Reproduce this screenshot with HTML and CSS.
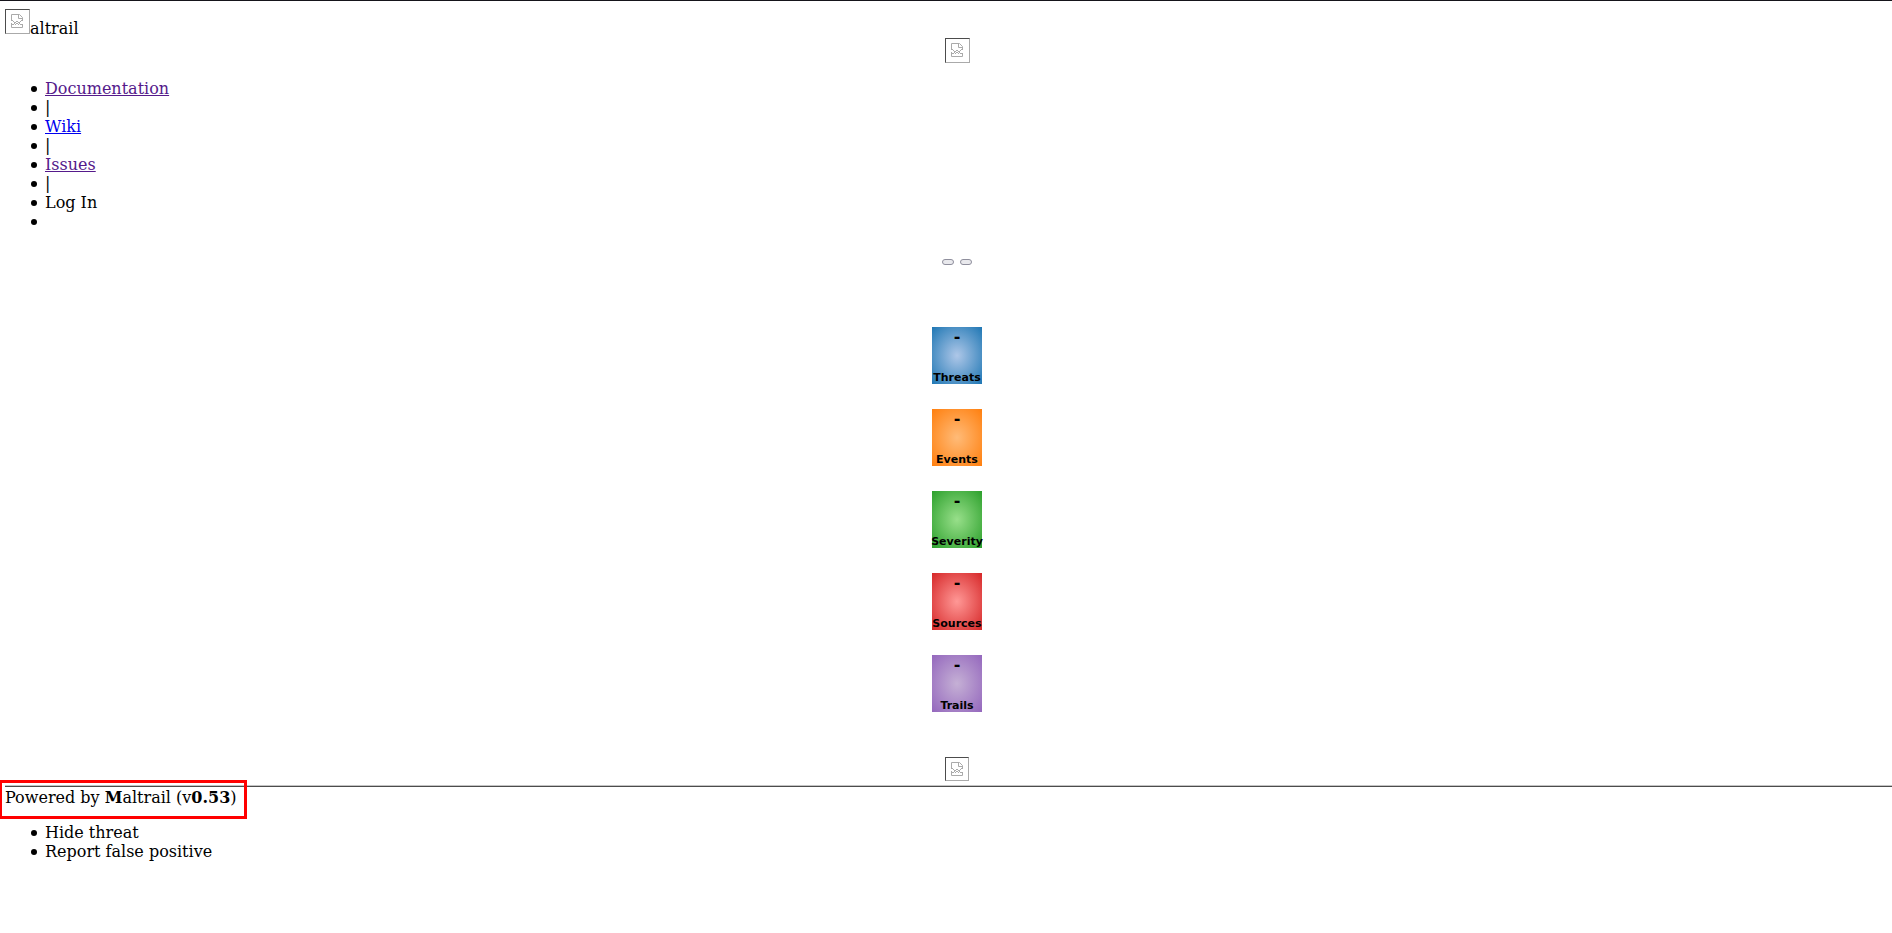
FILE: index.html
```html
<!DOCTYPE html>
<html lang="en">
<head>
<meta charset="utf-8">
<title>Maltrail</title>
<link rel="stylesheet" href="styles.css">
</head>
<body>
<svg class="defs" aria-hidden="true">
  <symbol id="broken" viewBox="0 0 12 14">
    <path d="M.5 7V.5H8.500L11.500 3.500V7M7.500 .5V4.500H11.500M0 6.500H2M10 6.500H12M2 7.500H3M5 7.500H7M9 7.500H10M3 8.500H5M7 8.500H9M0 9.500H1M3 9.500H4M8 9.500H9M1 10.500H3M4 10.500H5M7 10.500H8M9 10.500H12M5 9.500H7M.5 10V13.500H11.500V10" fill="none" stroke="#aaa"/>
  </symbol>
</svg>
<header class="header">
  <div class="logo"><span class="broken" role="img" aria-label="M"><svg class="glyph"><use href="#broken"/></svg></span><span>altrail</span></div>
  <div class="calendar"><span class="broken" role="img" aria-label="Calendar"><svg class="glyph"><use href="#broken"/></svg></span></div>
</header>
<nav>
  <ul class="list">
    <li><a class="visited" href="#documentation">Documentation</a></li>
    <li>|</li>
    <li><a href="#wiki">Wiki</a></li>
    <li>|</li>
    <li><a class="visited" href="#issues">Issues</a></li>
    <li>|</li>
    <li>Log In</li>
    <li></li>
  </ul>
</nav>
<main class="main">
  <div class="controls">
    <button class="pill" type="button" aria-label="Previous"></button>
    <button class="pill" type="button" aria-label="Next"></button>
  </div>
  <div class="tiles">
    <button class="tile threats" type="button"><span class="value">-</span><span>Threats</span></button>
    <button class="tile events" type="button"><span class="value">-</span><span>Events</span></button>
    <button class="tile severity" type="button"><span class="value">-</span><span>Severity</span></button>
    <button class="tile sources" type="button"><span class="value">-</span><span>Sources</span></button>
    <button class="tile trails" type="button"><span class="value">-</span><span>Trails</span></button>
  </div>
  <span class="broken small" role="img" aria-label="Loading"><svg class="glyph"><use href="#broken"/></svg></span>
</main>
<footer class="footer">
  <div class="powered">Powered by <b>M</b>altrail (v<b>0.53</b>)<span class="highlight"></span></div>
</footer>
<ul class="list">
  <li>Hide threat</li>
  <li>Report false positive</li>
</ul>
</body>
</html>
```
FILE: styles.css
```css
* {
  box-sizing: border-box;
}

body {
  margin: 0;
  border-top: 1px solid #15141a;
  background: #fff;
  color: #000;
  font: 16px/19px "DejaVu Serif", serif;
}

.defs {
  position: absolute;
  width: 0;
  height: 0;
}

.header {
  padding: 8px 0 16px 5px;
}

.logo {
  display: flex;
  align-items: flex-end;
  height: 29px;
}

.logo .broken {
  align-self: flex-start;
}

.calendar {
  display: flex;
  justify-content: center;
  padding-left: 18px;
}

.broken {
  display: flex;
  align-items: center;
  justify-content: center;
  width: 25px;
  height: 25px;
  border: 1px solid;
  border-color: #4c4c4c #aaa #aaa #4c4c4c;
}

.logo .broken,
.calendar .broken {
  padding: 0 1px 1px 0;
}

.broken.small {
  width: 24px;
  height: 24px;
}

.glyph {
  width: 12px;
  height: 14px;
}

.list {
  margin: 0;
  padding-left: 31px;
  list-style: none;
}

.list li {
  display: flex;
  gap: 8px;
  height: 19px;
}

.list li::before {
  content: "";
  width: 6px;
  height: 6px;
  margin-top: 7px;
  border-radius: 50%;
  background: #000;
}

a {
  color: #0000ee;
}

.visited {
  color: #551a8b;
}

.main {
  display: flex;
  flex-direction: column;
  align-items: center;
  padding: 28px 0 4px 22px;
}

.controls {
  display: flex;
  gap: 6px;
  margin-bottom: 62px;
}

.pill {
  width: 12px;
  height: 6px;
  padding: 0;
  border: 1px solid #8f8f9d;
  border-radius: 3px;
  background: #e9e9ed;
}

.tiles {
  display: flex;
  flex-direction: column;
  gap: 25px;
  margin-bottom: 45px;
}

.tile {
  display: flex;
  flex-direction: column;
  align-items: center;
  justify-content: space-between;
  width: 50px;
  height: 57px;
  padding: 0;
  border: 0;
  color: #000;
  font: bold 11px/13px "DejaVu Sans", sans-serif;
}

.value {
  font-size: 16px;
  line-height: 20px;
}

.threats {
  background: radial-gradient(#aec7e8, #1f77b4);
}

.events {
  background: radial-gradient(#ffbb78, #ff7f0e);
}

.severity {
  background: radial-gradient(#98df8a, #2ca02c);
}

.sources {
  background: radial-gradient(#ff9896, #d62728);
}

.trails {
  background: radial-gradient(#c5b0d5, #9467bd);
}

.footer {
  margin-left: 5px;
  padding-bottom: 16px;
  border-top: 1px solid #c4c4c4;
}

.powered {
  position: relative;
  padding-top: 1px;
  border-top: 1px solid #4c4c4c;
}

.highlight {
  position: absolute;
  top: -7px;
  left: -6px;
  width: 248px;
  height: 39px;
  border: 3px solid #f00;
}
```
